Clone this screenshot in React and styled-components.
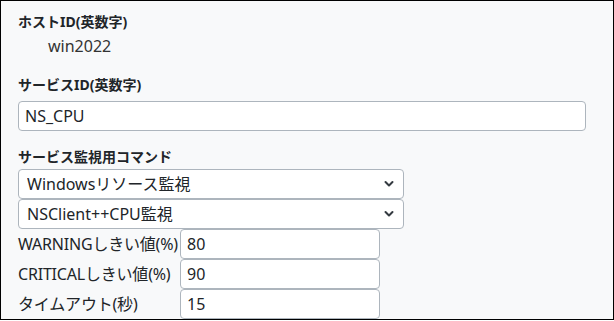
import React from "react";
import styled, { createGlobalStyle } from "styled-components";

const GlobalStyle = createGlobalStyle`
  html, body {
    margin: 0;
    padding: 0;
    background: #ffffff;
  }
  * {
    box-sizing: border-box;
  }
`;

const Panel = styled.div`
  width: 614px;
  height: 320px;
  border: 1px solid #000;
  background: #f8f9fa;
  overflow: hidden;
  padding: 9px 0 0 17px;
  font-family: "Noto Sans", "Noto Sans CJK JP", sans-serif;
  color: #212529;
`;

const Label = styled.div`
  font-size: 14px;
  font-weight: 700;
  line-height: 24px;
  margin-top: ${p => p.$top || 0}px;
`;

const Value = styled.div`
  font-size: 16px;
  line-height: 24px;
  padding-left: 30px;
  color: #333;
`;

const TextInput = styled.input`
  display: block;
  width: ${p => p.$width}px;
  height: 30px;
  margin-top: ${p => p.$top || 0}px;
  padding: 0 6px;
  border: 1px solid #adb5bd;
  border-radius: 4px;
  background: #fff;
  font-family: inherit;
  font-size: 16px;
  color: #212529;
  outline: none;
`;

const SelectWrap = styled.div`
  position: relative;
  width: 386px;
  height: 30px;
`;

const Select = styled.select`
  appearance: none;
  display: block;
  width: 100%;
  height: 30px;
  padding: 0 30px 0 8px;
  border: 1px solid #adb5bd;
  border-radius: 4px;
  background: #fff;
  font-family: inherit;
  font-size: 16px;
  color: #212529;
  outline: none;
`;

const Chevron = styled.svg`
  position: absolute;
  right: 10px;
  top: 11px;
  width: 10px;
  height: 8px;
  pointer-events: none;
`;

const SettingRow = styled.div`
  display: grid;
  grid-template-columns: 162px 200px;
  align-items: center;
  height: 30px;
`;

const RowLabel = styled.span`
  font-size: 16px;
  line-height: 30px;
  white-space: nowrap;
  letter-spacing: -0.2px;
`;

function Dropdown({ value }) {
  return (
    <SelectWrap>
      <Select defaultValue={value}>
        <option>{value}</option>
      </Select>
      <Chevron viewBox="0 0 10 8">
        <path d="M1.5 2 L5 5.5 L8.5 2" fill="none" stroke="#343a40" strokeWidth="2" strokeLinecap="round" strokeLinejoin="round" />
      </Chevron>
    </SelectWrap>
  );
}

const settings = [
  { label: "WARNINGしきい値(%)", value: "80" },
  { label: "CRITICALしきい値(%)", value: "90" },
  { label: "タイムアウト(秒)", value: "15" }
];

export default function App() {
  return (
    <>
      <GlobalStyle />
      <Panel>
        <Label>ホストID(英数字)</Label>
        <Value>win2022</Value>
        <Label $top={15}>サービスID(英数字)</Label>
        <TextInput $width={568} $top={4} defaultValue="NS_CPU" />
        <Label $top={14}>サービス監視用コマンド</Label>
        <Dropdown value="Windowsリソース監視" />
        <Dropdown value="NSClient++CPU監視" />
        {settings.map(s => (
          <SettingRow key={s.label}>
            <RowLabel>{s.label}</RowLabel>
            <TextInput $width={200} defaultValue={s.value} />
          </SettingRow>
        ))}
      </Panel>
    </>
  );
}
